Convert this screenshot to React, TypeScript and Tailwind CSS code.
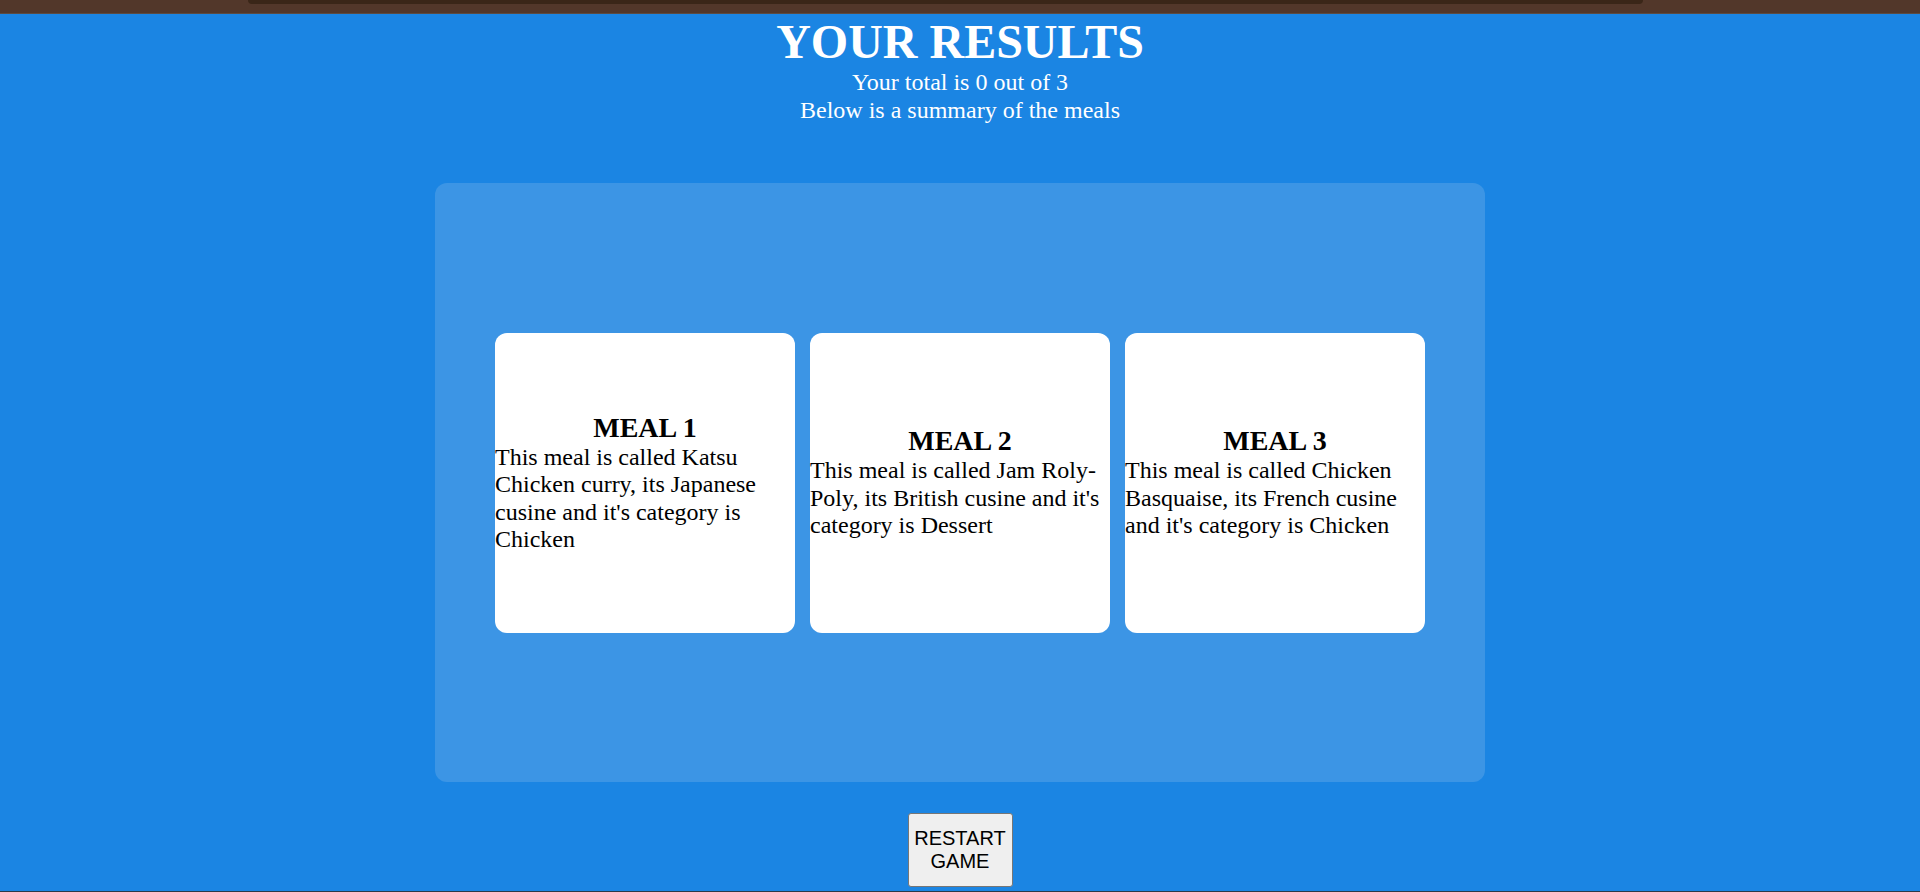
const meals = [
  { n: 1, text: "This meal is called Katsu Chicken curry, its Japanese cusine and it's category is Chicken" },
  { n: 2, text: "This meal is called Jam Roly-Poly, its British cusine and it's category is Dessert" },
  { n: 3, text: "This meal is called Chicken Basquaise, its French cusine and it's category is Chicken" },
];

function MealCard({ n, text }: { n: number; text: string }) {
  return (
    <div className="w-[300px] h-[300px] bg-white rounded-xl flex flex-col justify-center text-black">
      <h3 className="m-0 text-center font-bold text-[28px] leading-[32px]">MEAL {n}</h3>
      <p className="m-0 text-left text-[24px] leading-[27.6px]">{text}</p>
    </div>
  );
}

export default function App() {
  return (
    <div className="h-[892px] bg-[#1b85e3] flex flex-col font-['Liberation_Serif','Times_New_Roman',serif] overflow-hidden">
      <div className="h-[14px] bg-[#52372a] border-b border-[#5c4b42] shrink-0">
        <div className="ml-[248px] w-[1395px] h-[4px] bg-[#3a2618] rounded-b-md" />
      </div>

      <div className="flex flex-col items-center text-white">
        <h1 className="m-0 text-[48px] leading-[55px] font-bold">YOUR RESULTS</h1>
        <p className="m-0 text-[24px] leading-[27.6px]">Your total is 0 out of 3</p>
        <p className="m-0 text-[24px] leading-[27.6px]">Below is a summary of the meals</p>
      </div>

      <div className="mt-[59px] mx-auto w-[1050px] h-[599px] bg-[#3c95e5] rounded-xl flex items-center justify-center gap-[15px] shrink-0">
        {meals.map((m) => (
          <MealCard key={m.n} n={m.n} text={m.text} />
        ))}
      </div>

      <div className="mt-[31px] flex justify-center">
        <button className="w-[105px] h-[74px] bg-[#efefef] border border-[#767676] rounded-[3px] text-black text-[20px] leading-[23px] font-['Liberation_Sans',Arial,sans-serif]">
          RESTART
          <br />
          GAME
        </button>
      </div>

      <div className="mt-auto h-px bg-[#2b3a4a] shrink-0" />
    </div>
  );
}
